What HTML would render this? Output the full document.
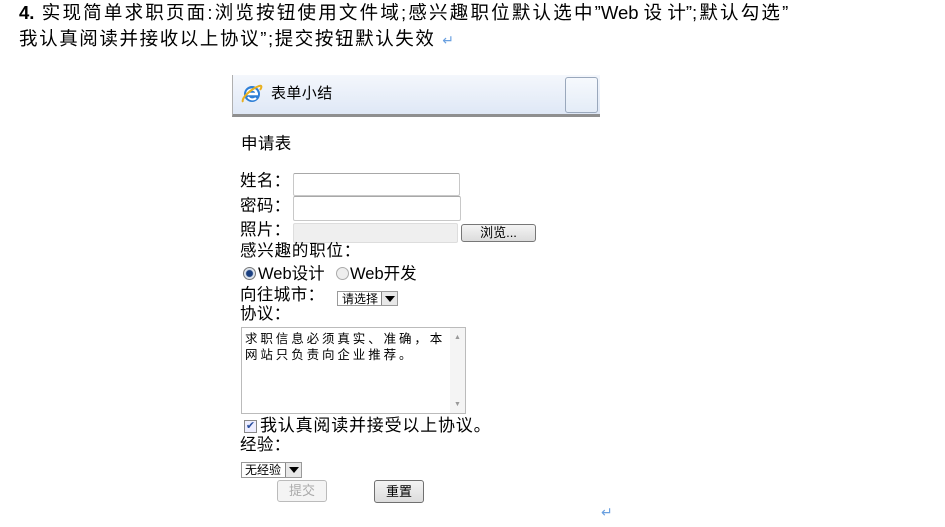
<!DOCTYPE html>
<html><head><meta charset="utf-8">
<style>
*{margin:0;padding:0;box-sizing:border-box}
body{width:945px;height:527px;background:#fff;position:relative;overflow:hidden;font-family:"Liberation Sans","Noto Sans CJK SC",sans-serif;color:#000}
.a{position:absolute;white-space:nowrap}
.hd{font-size:18.5px;line-height:20px;letter-spacing:2.2px}
.f{font-size:16.5px;line-height:18px;letter-spacing:0.4px;font-family:"Liberation Sans","WenQuanYi Zen Hei","Noto Sans CJK SC",sans-serif}
.inp{position:absolute;border:1px solid #c8c8c8;border-top-color:#a8a8a8;background:#fff;border-radius:2px}
.btn{position:absolute;border:1px solid #707070;border-radius:3px;background:linear-gradient(#f4f4f4,#dcdcdc);font-size:13px;text-align:center;font-family:"Liberation Sans","Noto Sans CJK SC",sans-serif}
.sel{position:absolute;border:1px solid #9a9a9a;background:#fff;font-size:12px;overflow:hidden;line-height:15px}
.arr{position:absolute;right:0;top:0;bottom:0;width:16px;background:#e8e8e8;border-left:1px solid #888}
.arr:after{content:"";position:absolute;left:3px;top:4px;border-left:5px solid transparent;border-right:5px solid transparent;border-top:6px solid #000}
</style></head><body>
<div class="a hd" style="left:19px;top:3px"><b style="letter-spacing:0">4.</b> 实现简单求职页面:浏览按钮使用文件域;感兴趣职位默认选中<span style="letter-spacing:0">”Web 设 计”</span>;默认勾选”</div>
<div class="a hd" style="left:19px;top:29px;letter-spacing:1.6px">我认真阅读并接收以上协议”;提交按钮默认失效 <span style="color:#6aa0e0;font-size:14px">↵</span></div>

<div class="a" style="left:232px;top:75px;width:368px;height:42px;background:linear-gradient(#f4f7fc,#dfe8f6);border-bottom:3px solid #8f8f8f;border-left:1px solid #b0b0b0"></div>
<div class="a" style="left:565px;top:77px;width:33px;height:36px;border:1px solid #9aa8bc;border-radius:3px;background:linear-gradient(#f6f9fd,#e4ecf7)"></div>
<svg class="a" style="left:240px;top:81px" width="24" height="24" viewBox="0 0 24 24">
<circle cx="12" cy="13" r="8" fill="#2e7fd6"/>
<path d="M6 13h12M7.5 12c0-4 8-5 9 0" stroke="#fff" stroke-width="2.4" fill="none"/>
<path d="M8 16c2 3 6 3 8 1" stroke="#fff" stroke-width="2" fill="none"/>
<path d="M3 21c-2-3 6-12 16-16 3-1 3 1 1 4" stroke="#e8b020" stroke-width="2" fill="none"/>
</svg>
<div class="a f" style="left:271px;top:85px;font-size:15px">表单小结</div>

<div class="a f" style="left:241px;top:135px">申请表</div>
<div class="a f" style="left:240px;top:172px">姓名：</div>
<div class="inp" style="left:293px;top:173px;width:167px;height:23px"></div>
<div class="a f" style="left:240px;top:197px">密码：</div>
<div class="inp" style="left:293px;top:196px;width:168px;height:25px"></div>
<div class="a f" style="left:240px;top:221px">照片：</div>
<div class="inp" style="left:293px;top:223px;width:165px;height:20px;background:#efefef;border-color:#ddd"></div>
<div class="btn" style="left:461px;top:224px;width:75px;height:18px;line-height:16px;border-color:#777">浏览...</div>
<div class="a f" style="left:240px;top:242px;letter-spacing:0.8px">感兴趣的职位：</div>
<div class="a" style="left:243px;top:267px;width:13px;height:13px;border-radius:50%;border:1px solid #777;background:radial-gradient(#1a3f80 0 3px,#dfe6ef 4px)"></div>
<div class="a f" style="left:258px;top:265px;letter-spacing:0">Web设计</div>
<div class="a" style="left:336px;top:267px;width:13px;height:13px;border-radius:50%;border:1px solid #aaa;background:#eee"></div>
<div class="a f" style="left:350px;top:265px;letter-spacing:0">Web开发</div>
<div class="a f" style="left:240px;top:286px">向往城市：</div>
<div class="sel" style="left:337px;top:291px;width:61px;height:15px"><span style="padding-left:4px">请选择</span><div class="arr"></div></div>
<div class="a f" style="left:240px;top:305px">协议：</div>
<div class="a" style="left:241px;top:327px;width:225px;height:87px;border:1px solid #bbb"></div>
<div class="a" style="left:450px;top:328px;width:15px;height:85px;background:#f4f4f4"></div>
<div class="a" style="left:454px;top:334px;font-size:7px;color:#999">▲</div>
<div class="a" style="left:454px;top:401px;font-size:7px;color:#999">▼</div>
<div class="a" style="left:245px;top:330px;font-size:12.5px;line-height:16px;letter-spacing:2.9px;font-family:'WenQuanYi Zen Hei','Noto Sans CJK SC',sans-serif">求职信息必须真实、准确，本<br>网站只负责向企业推荐。</div>
<div class="a" style="left:244px;top:420px;width:13px;height:13px;border:1px solid #888;background:#eef;color:#2a4fa0;font-size:11px;line-height:11px;text-align:center">✔</div>
<div class="a f" style="left:260px;top:417px;font-size:17px;letter-spacing:0.8px">我认真阅读并接受以上协议。</div>
<div class="a f" style="left:240px;top:436px">经验：</div>
<div class="sel" style="left:241px;top:462px;width:61px;height:16px"><span style="padding-left:3px">无经验</span><div class="arr"></div></div>
<div class="btn" style="left:277px;top:480px;width:50px;height:22px;line-height:20px;color:#aaa;border-color:#bbb;background:#f4f4f4">提交</div>
<div class="btn" style="left:374px;top:480px;width:50px;height:23px;line-height:21px">重置</div>
<div class="a" style="left:601px;top:504px;color:#6aa0e0;font-size:14px">↵</div>
</body></html>
